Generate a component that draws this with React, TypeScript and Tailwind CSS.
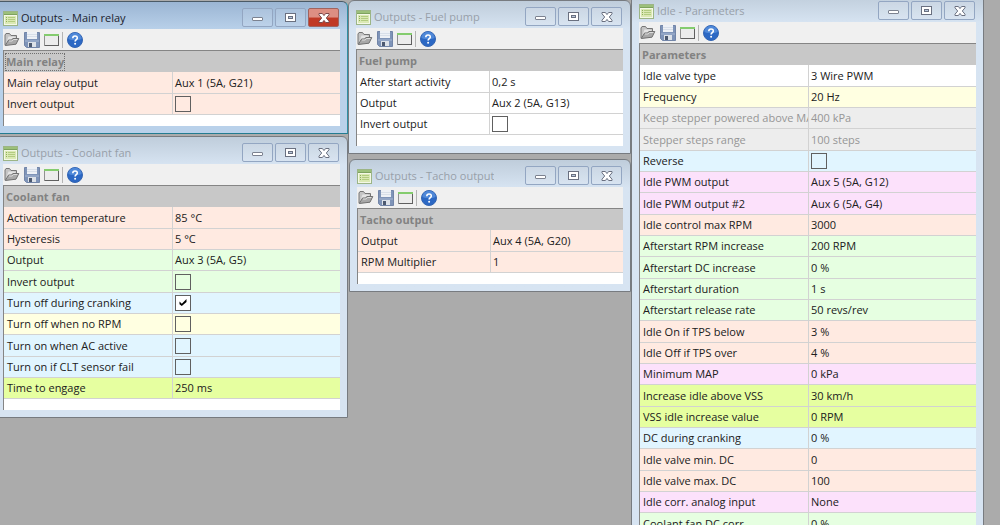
import { useId, type ReactNode } from "react";
import clsx from "clsx";

type Tone = "white" | "orange" | "yellow" | "gray" | "blue" | "pink" | "green" | "lime";

type Row = {
  label: string;
  value: string | boolean;
  tone: Tone;
};

const tones: Record<Tone, string> = {
  white: "bg-white",
  orange: "bg-[#ffeae1]",
  yellow: "bg-[#ffffe1]",
  gray: "bg-[#ededed] text-[#969696]",
  blue: "bg-[#e1f5ff]",
  pink: "bg-[#fce1fb]",
  green: "bg-[#e6ffe1]",
  lime: "bg-[#e6ffa0]",
};

const mainRelay: Row[] = [
  { label: "Main relay output", value: "Aux 1 (5A, G21)", tone: "orange" },
  { label: "Invert output", value: false, tone: "orange" },
];

const fuelPump: Row[] = [
  { label: "After start activity", value: "0,2 s", tone: "white" },
  { label: "Output", value: "Aux 2 (5A, G13)", tone: "white" },
  { label: "Invert output", value: false, tone: "white" },
];

const coolantFan: Row[] = [
  { label: "Activation temperature", value: "85 °C", tone: "orange" },
  { label: "Hysteresis", value: "5 °C", tone: "orange" },
  { label: "Output", value: "Aux 3 (5A, G5)", tone: "green" },
  { label: "Invert output", value: false, tone: "green" },
  { label: "Turn off during cranking", value: true, tone: "blue" },
  { label: "Turn off when no RPM", value: false, tone: "yellow" },
  { label: "Turn on when AC active", value: false, tone: "blue" },
  { label: "Turn on if CLT sensor fail", value: false, tone: "blue" },
  { label: "Time to engage", value: "250 ms", tone: "lime" },
];

const tachoOutput: Row[] = [
  { label: "Output", value: "Aux 4 (5A, G20)", tone: "orange" },
  { label: "RPM Multiplier", value: "1", tone: "orange" },
];

const idle: Row[] = [
  { label: "Idle valve type", value: "3 Wire PWM", tone: "white" },
  { label: "Frequency", value: "20 Hz", tone: "yellow" },
  { label: "Keep stepper powered above MA", value: "400 kPa", tone: "gray" },
  { label: "Stepper steps range", value: "100 steps", tone: "gray" },
  { label: "Reverse", value: false, tone: "blue" },
  { label: "Idle PWM output", value: "Aux 5 (5A, G12)", tone: "pink" },
  { label: "Idle PWM output #2", value: "Aux 6 (5A, G4)", tone: "pink" },
  { label: "Idle control max RPM", value: "3000", tone: "orange" },
  { label: "Afterstart RPM increase", value: "200 RPM", tone: "green" },
  { label: "Afterstart DC increase", value: "0 %", tone: "green" },
  { label: "Afterstart duration", value: "1 s", tone: "green" },
  { label: "Afterstart release rate", value: "50 revs/rev", tone: "green" },
  { label: "Idle On if TPS below", value: "3 %", tone: "orange" },
  { label: "Idle Off if TPS over", value: "4 %", tone: "orange" },
  { label: "Minimum MAP", value: "0 kPa", tone: "pink" },
  { label: "Increase idle above VSS", value: "30 km/h", tone: "lime" },
  { label: "VSS idle increase value", value: "0 RPM", tone: "lime" },
  { label: "DC during cranking", value: "0 %", tone: "blue" },
  { label: "Idle valve min. DC", value: "0", tone: "orange" },
  { label: "Idle valve max. DC", value: "100", tone: "orange" },
  { label: "Idle corr. analog input", value: "None", tone: "pink" },
  { label: "Coolant fan DC corr.", value: "0 %", tone: "green" },
];

function FormIcon() {
  return (
    <svg className="size-[15px] shrink-0" viewBox="0 0 15 15">
      <rect x="0.5" y="0.5" width="14" height="14" fill="#f4f8e6" stroke="#9cb586" />
      <rect x="1" y="1" width="13" height="2" fill="#9cc07a" />
      <rect x="1" y="3" width="13" height="1" fill="#7ea25f" />
      <rect x="2" y="5" width="11" height="8" fill="#dbe9b4" />
      <path d="M3 6.5h1M3 8.5h1M3 10.5h1" stroke="#8fae5c" />
      <path d="M5 6.5h7M5 8.5h7M5 10.5h7" stroke="#b3cc80" />
    </svg>
  );
}

function FolderIcon() {
  return (
    <svg className="size-4" viewBox="0 0 16 16">
      <path d="M1 13V3l1-1.5h3.5l1.5 2h5.5V7" fill="#c4c4c4" stroke="#767676" strokeLinejoin="round" />
      <path d="M2 11.5 4.5 4.5H10l2 1.5v3z" fill="#e4e4e4" />
      <path d="M1.2 13.5 4.6 8h3l1.2-1.5h6L12 12.2z" fill="#a8a8a8" stroke="#707070" strokeLinejoin="round" />
      <path d="M5 9h3.2l1.2-1.5h4" fill="none" stroke="#dddddd" />
    </svg>
  );
}

function SaveIcon() {
  return (
    <svg className="size-4" viewBox="0 0 16 16">
      <path d="M.5.5h15v15h-13l-2-2z" fill="#7f94b8" stroke="#7285a8" />
      <rect x="3" y="0" width="10" height="7" fill="#eef1f6" />
      <path d="M3 2.5h10M3 4.5h10" stroke="#d8dfe9" />
      <rect x="1" y="8" width="14" height="2" fill="#93a6c6" />
      <rect x="4" y="10" width="8" height="5" fill="#dce1e8" />
      <rect x="5" y="11" width="3" height="4" fill="#4c5970" />
    </svg>
  );
}

function PanelIcon() {
  return (
    <svg className="h-4 w-[15px]" viewBox="0 0 15 16">
      <rect x="0.5" y="2.5" width="14" height="11" fill="#ececec" stroke="#909090" />
      <path d="M14.5 3v11M1 13.5h14" stroke="#606060" />
      <rect x="0" y="2" width="15" height="2" fill="#84cc6e" />
    </svg>
  );
}

function HelpIcon() {
  return (
    <svg className="size-4" viewBox="0 0 16 16">
      <circle cx="8" cy="8" r="7.5" fill="#2c68c4" stroke="#3465b2" />
      <path d="M1.5 7a6.5 6.2 0 0 1 13 0c-3 1.6-10 1.6-13 0z" fill="#4f88d8" />
      <path
        d="M5.8 6.2c0-2.9 4.5-2.8 4.5-.3 0 1.7-2.2 1.8-2.2 3.6"
        fill="none"
        stroke="white"
        strokeWidth="1.6"
      />
      <circle cx="8.1" cy="11.8" r="1" fill="white" />
    </svg>
  );
}

function CaptionButton({ label, close, children }: { label: string; close?: boolean; children: ReactNode }) {
  return (
    <button
      type="button"
      aria-label={label}
      className={clsx(
        "flex h-[19px] w-[31px] items-center justify-center rounded-xs border",
        close
          ? "border-[#a0645f] bg-linear-to-b from-[#dd8f83] from-45% to-[#c03a26] to-55%"
          : "border-[#93a6c2] bg-white/10",
      )}
    >
      <svg className="h-3 w-3.5" viewBox="0 0 14 12">
        {children}
      </svg>
    </button>
  );
}

function TitleBar({ title, active }: { title: string; active?: boolean }) {
  return (
    <div className="flex h-[27px] items-end gap-0.5 pr-px pb-0.5">
      <div className="flex min-w-0 flex-1 items-center gap-[3px] pb-px text-[11px] leading-4">
        <FormIcon />
        <h2 className={clsx("truncate", active ? "text-[#1b232d]" : "text-[#98a0a9]")}>{title}</h2>
      </div>
      <CaptionButton label="Minimize">
        <rect x="1.5" y="5.5" width="10" height="3" rx="0.5" fill="white" stroke="#7c8290" />
      </CaptionButton>
      <CaptionButton label="Maximize">
        <rect x="1.5" y="1.5" width="10" height="8" fill="white" stroke="#6a7080" />
        <rect x="4.5" y="4.5" width="4" height="2" fill="#b9c8dc" stroke="#6a7080" />
      </CaptionButton>
      <CaptionButton label="Close" close={active}>
        <path
          d="M2 1.5h3.4L7 3.6l1.6-2.1H12v1.3L9.3 6l2.7 3.2v1.3H8.6L7 8.4l-1.6 2.1H2V9.2L4.7 6 2 2.8z"
          fill="white"
          stroke={active ? "#7c4a4c" : "#6a7080"}
        />
      </CaptionButton>
    </div>
  );
}

function ToolBar() {
  return (
    <div className="flex h-[21px] items-center gap-1 bg-[#f0f0f0] pl-px">
      <button type="button" aria-label="Open">
        <FolderIcon />
      </button>
      <button type="button" aria-label="Save">
        <SaveIcon />
      </button>
      <button type="button" aria-label="Show panel">
        <PanelIcon />
      </button>
      <div className="-ml-px h-4 w-px bg-[#b4b4b4]" />
      <button type="button" aria-label="Help">
        <HelpIcon />
      </button>
    </div>
  );
}

function PropertyRow({ label, value, tone }: Row) {
  const id = useId();
  const isFlag = typeof value === "boolean";

  return (
    <tr className={clsx("h-[21px] nth-[3n+1]:h-[22px]", tones[tone])}>
      <th scope="row" className="overflow-hidden border-r border-b border-[#d2d2d2] p-0 pl-[3px] text-left font-normal">
        {isFlag ? <label htmlFor={id}>{label}</label> : label}
      </th>
      <td className="border-b border-[#d2d2d2] p-0 pl-0.5">
        {isFlag ? (
          <span className="relative block size-4">
            <input
              id={id}
              type="checkbox"
              defaultChecked={value}
              className="peer block size-4 appearance-none border border-[#606060] checked:bg-white"
            />
            <svg className="pointer-events-none absolute inset-0 hidden size-4 peer-checked:block" viewBox="0 0 16 16">
              <path d="m4.5 6.5 2.3 2.2L11.5 4v3L6.8 11 4.5 9.2z" fill="black" />
            </svg>
          </span>
        ) : (
          value
        )}
      </td>
    </tr>
  );
}

type WindowProps = {
  title: string;
  heading: string;
  rows: Row[];
  className: string;
  labelWidth: string;
  active?: boolean;
};

function ToolWindow({ title, heading, rows, className, labelWidth, active }: WindowProps) {
  return (
    <section
      className={clsx(
        "absolute rounded-t-md border px-[7px] pb-[7px]",
        active
          ? "border-[#4b5a66] border-r-[#2f8fa3] border-b-[#237c91] bg-[#b9d1ea] bg-linear-to-b from-[#9bb5d3] to-[#b9d1ea] to-[28px]"
          : "border-[#777b80] bg-[#d7e4f2] bg-linear-to-b from-[#bfcddb] to-[#d7e4f2] to-[28px]",
        className,
      )}
    >
      <TitleBar title={title} active={active} />
      <ToolBar />
      <div className="border-t border-l border-[#858585] bg-white pb-[11px]">
        <table className="w-full table-fixed border-separate border-spacing-0 text-[11px] leading-4 whitespace-nowrap text-[#202020]">
          <colgroup>
            <col className={labelWidth} />
            <col />
          </colgroup>
          <thead>
            <tr className="h-[21px] bg-[#c8c8c8] text-[#828282]">
              <th colSpan={2} className="p-0 pl-0.5 text-left font-bold">
                <span className={clsx("inline-block", active && "outline outline-dotted outline-[#707070]")}>
                  {heading}
                </span>
              </th>
            </tr>
          </thead>
          <tbody>
            {rows.map((row) => (
              <PropertyRow key={row.label} {...row} />
            ))}
          </tbody>
        </table>
      </div>
    </section>
  );
}

export default function App() {
  return (
    <main className="relative h-screen overflow-hidden bg-[#ababab] font-['Open_Sans','Noto_Sans',sans-serif]">
      <ToolWindow
        title="Outputs - Coolant fan"
        heading="Coolant fan"
        rows={coolantFan}
        className="top-[136px] -left-[5px] w-[353px]"
        labelWidth="w-[169px]"
      />
      <ToolWindow
        title="Outputs - Fuel pump"
        heading="Fuel pump"
        rows={fuelPump}
        className="top-0 left-[348px] w-[283px]"
        labelWidth="w-[133px]"
      />
      <ToolWindow
        title="Outputs - Tacho output"
        heading="Tacho output"
        rows={tachoOutput}
        className="top-[159px] left-[349px] w-[282px]"
        labelWidth="w-[133px]"
      />
      <ToolWindow
        title="Idle - Parameters"
        heading="Parameters"
        rows={idle}
        className="-top-[6px] left-[631px] w-[353px]"
        labelWidth="w-[169px]"
      />
      <ToolWindow
        title="Outputs - Main relay"
        heading="Main relay"
        rows={mainRelay}
        className="top-px -left-[5px] w-[353px]"
        labelWidth="w-[169px]"
        active
      />
    </main>
  );
}
